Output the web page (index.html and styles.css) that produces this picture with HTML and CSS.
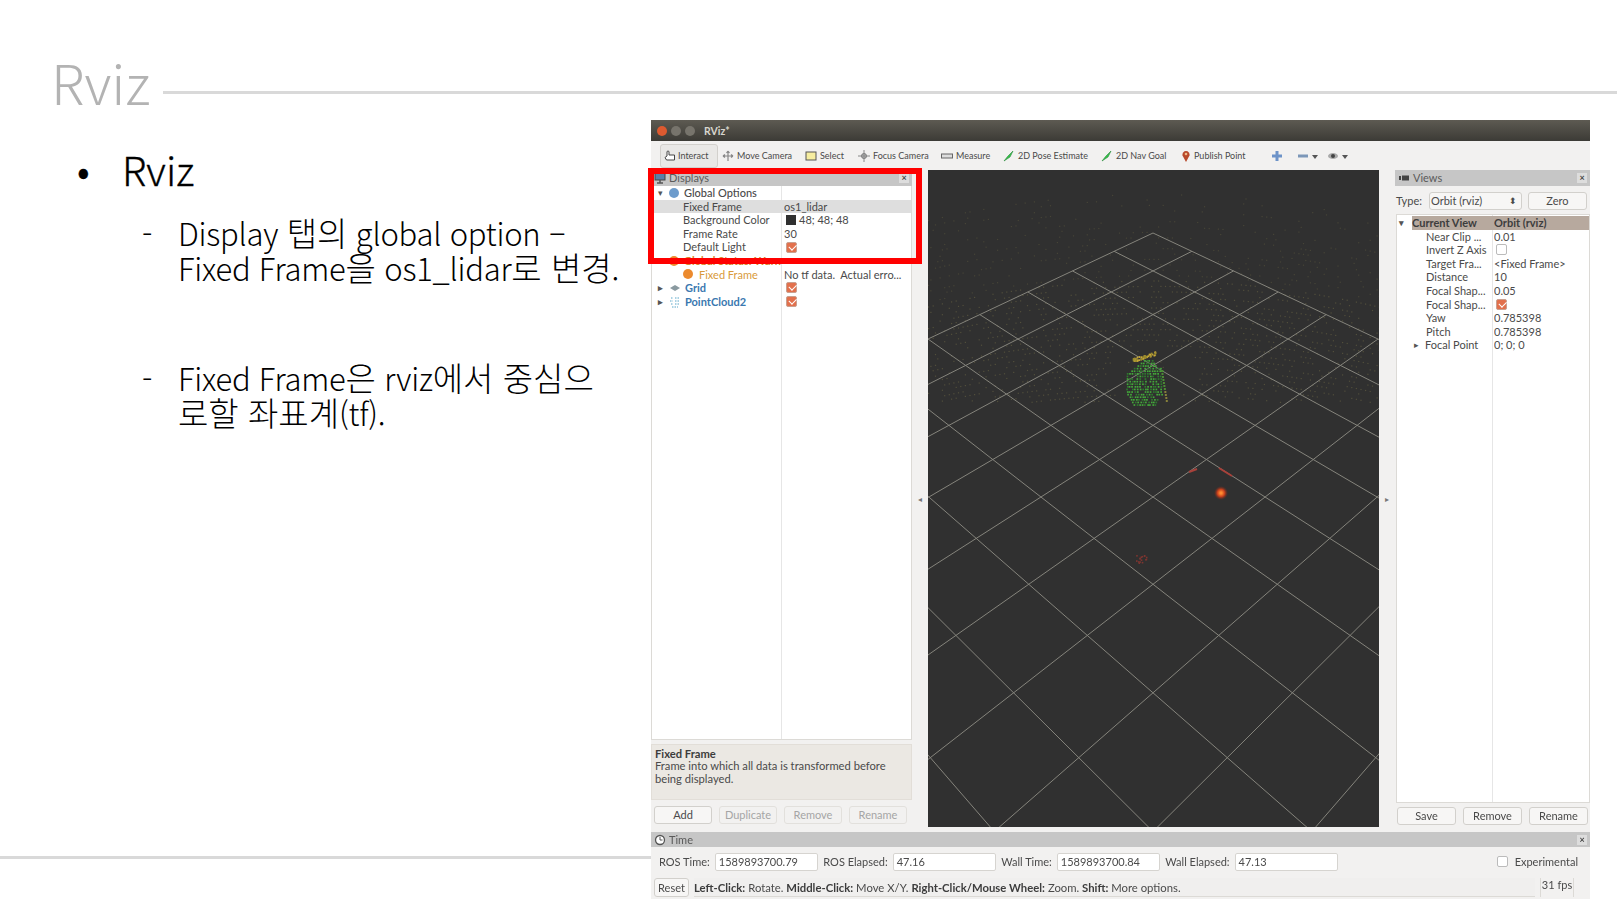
FILE: index.html
```html
<!DOCTYPE html>
<html lang="ko">
<head>
<meta charset="utf-8">
<title>Rviz</title>
<link rel="stylesheet" href="styles.css">
</head>
<body>
<div class="slide">
  <header class="slide-head">
    <h1 class="slide-title">Rviz</h1>
    <div class="slide-line"></div>
  </header>
  <div class="slide-body">
    <section class="notes">
      <div class="bullet"><span class="bullet-mark">•</span><span>Rviz</span></div>
      <div class="sub"><span class="sub-mark">-</span><span>Display <span class="kr">탭의</span> global option –<br>Fixed Frame<span class="kr">을</span> os1_lidar<span class="kr">로 변경</span>.</span></div>
      <div class="sub sub-second"><span class="sub-mark">-</span><span>Fixed Frame<span class="kr">은</span> rviz<span class="kr">에서 중심으</span><br><span class="kr">로할 좌표계</span>(tf).</span></div>
    </section>
    <section class="rviz">
      <div class="titlebar">
        <span class="wbtn wbtn-close"></span><span class="wbtn"></span><span class="wbtn"></span>
        <span class="wtitle">RViz*</span>
      </div>
      <div class="toolbar">
        <div class="tool tool-active"><svg class="ico" viewBox="0 0 12 12"><path d="M3 6V2a1 1 0 0 1 2 0v3h5.500v5H2.500L1 7.500 3 6z" fill="#fff" stroke="#444" stroke-width="1"/></svg>Interact</div>
        <div class="tool tool-move"><svg class="ico" viewBox="0 0 12 12"><path d="M6 1v10M1 6h10M6 1 4.500 3M6 1l1.500 2M1 6l2-1.500M1 6l2 1.500M11 6 9 4.500M11 6 9 7.500" fill="none" stroke="#888" stroke-width="1.200"/></svg>Move Camera</div>
        <div class="tool tool-select"><svg class="ico" viewBox="0 0 12 12"><rect x="1" y="2" width="10" height="8" fill="#f6eda0" stroke="#555" stroke-width="1"/></svg>Select</div>
        <div class="tool tool-focus"><svg class="ico" viewBox="0 0 12 12"><circle cx="6" cy="6" r="2.500" fill="#bbb" stroke="#777"/><path d="M6 0v12M0 6h12" stroke="#888" stroke-width="1"/></svg>Focus Camera</div>
        <div class="tool tool-measure"><svg class="ico" viewBox="0 0 12 12"><rect x="0.500" y="4" width="11" height="4" fill="#ddd" stroke="#666" stroke-width="1"/></svg>Measure</div>
        <div class="tool tool-pose"><svg class="ico" viewBox="0 0 12 12"><path d="M1 11 5 6l5-5-3 6z" fill="#35c24a" stroke="#2a8a3a" stroke-width="0.600"/></svg>2D Pose Estimate</div>
        <div class="tool tool-nav"><svg class="ico" viewBox="0 0 12 12"><path d="M1 11 5 6l5-5-3 6z" fill="#35c24a" stroke="#2a8a3a" stroke-width="0.600"/></svg>2D Nav Goal</div>
        <div class="tool tool-pin"><svg class="ico ico-pin" viewBox="0 0 12 12"><path d="M6 12 2.500 5.500a3.600 3.600 0 1 1 7 0z" fill="#b8492b"/><circle cx="6" cy="4" r="1.300" fill="#eebb88"/></svg>Publish Point</div>
        <svg class="ico ico-plus" viewBox="0 0 12 12"><path d="M6 1v10M1 6h10" stroke="#6d93c8" stroke-width="3"/></svg>
        <svg class="ico ico-minus" viewBox="0 0 12 12"><path d="M1 6h10" stroke="#7c97b8" stroke-width="3"/></svg><span class="drop"></span>
        <svg class="ico ico-eye" viewBox="0 0 12 12"><ellipse cx="6" cy="6" rx="5" ry="3" fill="#aaa"/><circle cx="6" cy="6" r="2" fill="#444"/></svg><span class="drop"></span>
      </div>
      <div class="workspace">
        <aside class="panel panel-left">
          <div class="dock-head"><svg class="ico" viewBox="0 0 12 12"><rect x="1" y="1" width="10" height="7" fill="#5b7fa8" stroke="#444"/><path d="M3 11h6M6 8v3" stroke="#555" stroke-width="1.500"/></svg><span class="dock-title">Displays</span><span class="dock-x">×</span></div>
          <div class="tree tree-left">
            <div class="row"><span class="cell cell-top"><span class="arrow">▾</span><span class="dot dot-blue"></span><span>Global Options</span></span><span class="cell"></span></div>
            <div class="row row-sel"><span class="cell cell-child">Fixed Frame</span><span class="cell">os1_lidar</span></div>
            <div class="row"><span class="cell cell-child">Background Color</span><span class="cell"><span class="swatch"></span>48; 48; 48</span></div>
            <div class="row"><span class="cell cell-child">Frame Rate</span><span class="cell">30</span></div>
            <div class="row"><span class="cell cell-child">Default Light</span><span class="cell"><span class="check"></span></span></div>
            <div class="row row-warn"><span class="cell cell-top"><span class="arrow">▾</span><span class="dot dot-warn"></span><span>Global Status: Warn</span></span><span class="cell"></span></div>
            <div class="row"><span class="cell cell-warnchild"><span class="dot dot-warn"></span><span class="warn-text">Fixed Frame</span></span><span class="cell">No tf data.  Actual erro...</span></div>
            <div class="row row-blue"><span class="cell cell-top"><span class="arrow">▸</span><svg class="ico ico-tree" viewBox="0 0 12 12"><path d="M1 6 6 3l5 3-5 3z" fill="#8a9aa0"/></svg><span>Grid</span></span><span class="cell"><span class="check"></span></span></div>
            <div class="row row-blue"><span class="cell cell-top"><span class="arrow">▸</span><svg class="ico ico-tree" viewBox="0 0 12 12"><path d="M2 2h2M6 2h4M1 5h3M6 5h5M2 8h2M6 8h4M3 11h6" stroke="#58a6c8" stroke-width="1" stroke-dasharray="1.500 1"/></svg><span>PointCloud2</span></span><span class="cell"><span class="check"></span></span></div>
          </div>
          <div class="help"><b>Fixed Frame</b><br>Frame into which all data is transformed before<br>being displayed.</div>
          <div class="btn-row btn-row-left">
            <span class="btn">Add</span><span class="btn btn-off">Duplicate</span><span class="btn btn-off">Remove</span><span class="btn btn-off">Rename</span>
          </div>
        </aside>
        <div class="splitter">◂</div>
        <div class="view3d"><canvas id="scene" width="451" height="657"></canvas></div>
        <div class="splitter">▸</div>
        <aside class="panel panel-right">
          <div class="dock-head"><svg class="ico" viewBox="0 0 12 12"><path d="M1 4h2v4H1zM4 3.500h7v5H4z" fill="#444"/></svg><span class="dock-title">Views</span><span class="dock-x">×</span></div>
          <div class="type-row"><span>Type:</span><span class="combo">Orbit (rviz)<span class="combo-arrows">⬍</span></span><span class="btn btn-zero">Zero</span></div>
          <div class="tree tree-right">
            <div class="row row-head"><span class="arrow">▾</span><span class="cell cell-head">Current View</span><span class="cell">Orbit (rviz)</span></div>
            <div class="row"><span class="cell cell-child">Near Clip ...</span><span class="cell">0.01</span></div>
            <div class="row"><span class="cell cell-child">Invert Z Axis</span><span class="cell"><span class="check check-off"></span></span></div>
            <div class="row"><span class="cell cell-child">Target Fra...</span><span class="cell">&lt;Fixed Frame&gt;</span></div>
            <div class="row"><span class="cell cell-child">Distance</span><span class="cell">10</span></div>
            <div class="row"><span class="cell cell-child">Focal Shap...</span><span class="cell">0.05</span></div>
            <div class="row"><span class="cell cell-child">Focal Shap...</span><span class="cell"><span class="check"></span></span></div>
            <div class="row"><span class="cell cell-child">Yaw</span><span class="cell">0.785398</span></div>
            <div class="row"><span class="cell cell-child">Pitch</span><span class="cell">0.785398</span></div>
            <div class="row"><span class="cell cell-child cell-exp"><span class="arrow">▸</span>Focal Point</span><span class="cell">0; 0; 0</span></div>
          </div>
          <div class="btn-row btn-row-right">
            <span class="btn">Save</span><span class="btn">Remove</span><span class="btn">Rename</span>
          </div>
        </aside>
      </div>
      <div class="dock-head dock-time"><svg class="ico" viewBox="0 0 12 12"><circle cx="6" cy="6" r="4.500" fill="#fff" stroke="#555" stroke-width="1.300"/><path d="M6 3v3h2.500" fill="none" stroke="#555"/></svg><span class="dock-title">Time</span><span class="dock-x">×</span></div>
      <div class="time-row">
        <span>ROS Time:</span><span class="field">1589893700.79</span>
        <span>ROS Elapsed:</span><span class="field">47.16</span>
        <span>Wall Time:</span><span class="field">1589893700.84</span>
        <span>Wall Elapsed:</span><span class="field">47.13</span>
        <span class="exp"><span class="check check-off"></span>Experimental</span>
      </div>
      <div class="status-row">
        <span class="btn btn-reset">Reset</span>
        <span class="status-text"><b>Left-Click:</b> Rotate. <b>Middle-Click:</b> Move X/Y. <b>Right-Click/Mouse Wheel:</b> Zoom. <b>Shift:</b> More options.</span>
        <span class="fps">31 fps</span>
      </div>
      <div class="redbox"></div>
    </section>
  </div>
</div>
<script src="scene.js"></script>
</body>
</html>
```

FILE: styles.css
```css
* { box-sizing: border-box; }
html, body { margin: 0; padding: 0; background: #fff; }
.slide {
  width: 1617px; height: 905px; overflow: hidden; background: #fff;
  font-family: "Noto Sans CJK KR", "Noto Sans", sans-serif;
  color: #000;
}
.slide-head { height: 120px; display: flex; align-items: flex-start; padding-left: 51px; }
.slide-title { margin: 43px 0 0; font-size: 55px; line-height: 76px; font-weight: 300; color: #b3b3b3; }
.slide-line { flex: 1; height: 3px; background: #d9d9d9; margin: 91px 0 0 13px; }
.slide-body { display: flex; height: 785px; }
.notes { width: 651px; height: 739px; border-bottom: 3px solid #d9d9d9; padding: 23px 0 0 77px; flex: none; }
.bullet { display: flex; font-size: 40px; line-height: 52px; font-weight: 300; -webkit-text-stroke: 0.3px #000; }
.bullet-mark { width: 45px; }
.sub { display: flex; font-size: 31px; line-height: 35px; margin: 20px 0 0 65px; font-weight: 300; white-space: nowrap; letter-spacing: -0.25px; }
.kr { font-size: 33px; line-height: 1; letter-spacing: 0; }
.sub-mark { width: 36px; }
.sub-second { margin-top: 75px; }

.rviz {
  position: relative; width: 939px; height: 779px; flex: none;
  display: flex; flex-direction: column;
  background: #f2f1f0; color: #4a4a4a;
  font-family: Lato, "Noto Sans", sans-serif; font-size: 11px; line-height: 13.6px;
  filter: blur(0.35px);
}
.titlebar { height: 21px; display: flex; align-items: center; padding: 2px 0 0 6px; gap: 4px;
  background: linear-gradient(#5d5a52, #3c3b36); }
.wbtn { width: 10px; height: 10px; border-radius: 50%; background: #77746c; margin-top: -2px; }
.wbtn-close { background: #dd5a30; }
.wtitle { color: #d8d6cf; font-weight: 700; margin-left: 5px; font-size: 10.5px; }
.toolbar { height: 29px; display: flex; align-items: center; padding: 1px 0 0 9px; font-size: 9px; }
.tool { display: flex; align-items: center; gap: 3px; height: 24px; flex: none; }
.tool-active { width: 58px; padding-left: 3px; gap: 2px; background: #e9e8e6; border: 1px solid #d2d0cc; border-radius: 3px; margin-right: 4px; }
.tool-move { width: 83px; }
.tool-select { width: 53px; }
.tool-focus { width: 83px; }
.tool-measure { width: 62px; }
.tool-pose { width: 98px; }
.tool-nav { width: 79px; }
.tool-pin { width: 91px; gap: 2px; }
.ico { width: 12px; height: 12px; flex: none; display: block; }
.ico-minus { margin-left: 14px; }
.ico-eye { margin-left: 9px; }
.drop { width: 0; height: 0; border: 3px solid transparent; border-top: 4px solid #555; margin: 4px 0 0 3px; }
.workspace { height: 660px; display: flex; }
.panel { display: flex; flex-direction: column; flex: none; }
.panel-left { width: 261px; }
.panel-right { width: 195px; }
.splitter { width: 16px; flex: none; display: flex; align-items: center; justify-content: center; font-size: 8px; color: #777; }
.view3d { width: 451px; height: 657px; flex: none; background: #303030; }
.view3d canvas { display: block; }
.dock-head { height: 16px; flex: none; display: flex; align-items: center; gap: 3px; padding: 0 3px; background: #c6c6c6; color: #5a5a5a; }
.dock-title { flex: 1; }
.dock-x { width: 10px; height: 10px; line-height: 9px; text-align: center; background: #ddd; font-size: 9px; font-weight: 700; color: #444; }
.dock-time { margin-top: 2px; height: 15px; }
.tree { background-color: #fff; border: 1px solid #dcdad6; border-top: 0; }
.tree-left { height: 554px; flex: none; background-image: linear-gradient(#e6e6e6, #e6e6e6); background-size: 1px 100%; background-position: 129px 0; background-repeat: no-repeat; }
.row { display: grid; grid-template-columns: 132px 1fr; height: 13.6px; white-space: nowrap; }
.row-sel { background: #dedede; }
.cell { display: flex; align-items: center; overflow: hidden; white-space: pre; }
.cell-top { padding-left: 6px; font-weight: 500; }
.cell-child { padding-left: 31px; }
.cell-warnchild { padding-left: 31px; gap: 6px; }
.warn-text { color: #d99a3c; }
.row-warn .cell-top { color: #d9862c; font-weight: 700; }
.row-blue .cell-top { color: #3a78b0; font-weight: 700; }
.arrow { width: 8px; font-size: 9px; color: #555; flex: none; margin-right: 3px; }
.dot { width: 10px; height: 10px; border-radius: 50%; flex: none; margin-right: 5px; }
.cell-warnchild .dot { margin-right: 0; }
.dot-blue { background: #6d9ccc; }
.dot-warn { background: #ec8a2e; }
.ico-tree { margin-right: 4px; }
.swatch { width: 10px; height: 10px; background: #303030; margin: 0 3px 0 2px; flex: none; }
.check { width: 11px; height: 11px; margin-left: 2px; background: #e2704c; border: 1px solid #c9a090; border-radius: 2px; flex: none; position: relative; }
.check::after { content: ""; position: absolute; left: 2px; top: 1px; width: 6px; height: 3.500px; border-left: 1.500px solid #fff; border-bottom: 1.500px solid #fff; transform: rotate(-45deg); }
.check-off { background: #fff; border-color: #bbb; }
.check-off::after { display: none; }
.help { height: 56px; margin-top: 4px; flex: none; background: #ebe8e3; border: 1px solid #e2ded8; padding: 3px 3px; line-height: 12.300px; font-size: 11.2px; }
.help b, .status-text b { font-weight: 700; color: #3d3d3d; }
.btn-row { display: flex; flex: none; }
.btn-row-left { gap: 7px; padding: 6px 3px 0; }
.btn-row-left .btn { width: 58px; }
.btn { display: flex; align-items: center; justify-content: center; height: 18px; background: #f7f6f5; border: 1px solid #d2d0cc; border-radius: 3px; flex: none; }
.btn-off { background: #f2f1f0; color: #a5a5a5; border-color: #e2e0dc; }
.type-row { height: 28px; flex: none; display: flex; align-items: center; padding: 1px 0 0 1px; gap: 6px; }
.combo { width: 93px; height: 18px; display: flex; align-items: center; justify-content: space-between; padding: 0 1px; margin-left: 1px; background: #f7f6f5; border: 1px solid #d2d0cc; border-radius: 3px; }
.combo-arrows { font-size: 9px; margin-right: 3px; }
.btn-zero { width: 59px; }
.tree-right { height: 589px; flex: none; margin-left: 1px; padding-top: 1px; border-top: 1px solid #dcdad6; background-image: linear-gradient(#e6e6e6, #e6e6e6); background-size: 1px 100%; background-position: 95px 0; background-repeat: no-repeat; }
.tree-right .row { grid-template-columns: 97px 1fr; }
.tree-right .cell-child { padding-left: 29px; }
.cell-exp { padding-left: 17px !important; }
.row-head { position: relative; background: #b7a99e; margin-left: 15px; grid-template-columns: 82px 1fr !important; color: #3d3d3d; font-weight: 700; }
.row-head .arrow { position: absolute; left: -13px; top: 0; }
.cell-head { padding-left: 0; }
.btn-row-right { gap: 7px; padding: 4px 3px 0 2px; }
.btn-row-right .btn { width: 59px; }
.time-row { height: 29px; flex: none; display: flex; align-items: center; padding-left: 8px; gap: 5px; }
.field { width: 103.500px; height: 18px; padding: 0 3px; display: flex; align-items: center; background: #fff; border: 1px solid #d6d4d0; border-radius: 2px; flex: none; }
.exp { margin-left: auto; margin-right: 12px; display: flex; align-items: center; gap: 7px; }
.status-row { height: 19px; flex: none; display: flex; align-items: stretch; padding-left: 3px; gap: 5px; margin-top: 2px; }
.btn-reset { width: 35px; height: 19px; }
.status-text { flex: 1; white-space: pre; display: block; line-height: 19px; font-size: 11.3px; background: #f0efee; border-bottom: 1px solid #dcdad6; }
.fps { width: 34px; margin-right: 16px; border-left: 1px solid #dcdad6; border-right: 1px solid #dcdad6; text-align: center; line-height: 14px; }
.redbox { position: absolute; left: -3px; top: 48px; width: 274px; height: 96px; border: 6px solid #f00; }
```

FILE: scene.js
```js
(function () {
  var c = document.getElementById('scene');
  var g = c.getContext('2d');
  var OX = 928, OY = 170, A = 37.6, D = -0.0329, C = 10.05, CX = 1153, Y0 = 233;
  function P(i, j) {
    var s = i + j, w = 1 + D * s;
    return [CX + A * (i - j) / w - OX, (Y0 + C * s) / w - OY];
  }
  function rnd(n) { var x = Math.sin(n * 12.9898) * 43758.5453; return x - Math.floor(x); }
  g.fillStyle = '#303030';
  g.fillRect(0, 0, 451, 657);

  // background point cloud
  for (var r = 0; r < 44; r++) {
    var y0 = 24 + r * 5.4;
    for (var x = 0; x < 451; x += 4.6) {
      var k = r * 1000 + x;
      var t = (x - 225) / 225;
      var y = y0 + t * t * 26;
      var dx = x + (r % 2) * 2.3;
      var dens = r < 16 ? 0.1 + r * 0.012 : 0.5;
      if (y > 178 && Math.abs(t) < 0.2) dens = 0.04;
      if (y > 232) dens = 0;
      if (rnd(k) > dens) continue;
      g.fillStyle = 'rgba(128,122,76,' + (r < 16 ? 0.28 : 0.42) + ')';
      g.fillRect(dx, y, 1.2, 1.2);
    }
  }

  // grid
  g.strokeStyle = '#85847c';
  g.lineWidth = 1;
  for (var n = 0; n <= 10; n++) {
    var a = P(n, 0), b = P(n, 10), a2 = P(0, n), b2 = P(10, n);
    g.beginPath(); g.moveTo(a[0], a[1]); g.lineTo(b[0], b[1]); g.stroke();
    g.beginPath(); g.moveTo(a2[0], a2[1]); g.lineTo(b2[0], b2[1]); g.stroke();
  }

  // person
  var i = 0;
  for (var py = 360; py < 405; py += 2.6) {
    var half = py < 372 ? 4 + (py - 360) * 1.2 : 18 - Math.max(0, py - 392) * 0.6;
    var cx = 1144 + (py < 372 ? 3 : 0);
    for (var px = cx - half; px < cx + half; px += 2.6) {
      i++;
      if (rnd(i + 5) < 0.1) continue;
      g.fillStyle = rnd(i) > 0.4 ? '#43a83a' : '#2f7a2e';
      g.fillRect(px - OX + rnd(i + 9), py - OY, 1.7, 1.7);
    }
  }
  for (var ay = 370; ay < 402; ay += 3) {
    g.fillStyle = ay > 388 ? '#86803a' : '#4c8a35';
    g.fillRect(1161 + (ay - 370) * 0.16 - OX, ay - OY, 2, 2);
  }
  // head: a scatter of yellow returns
  for (var h = 0; h < 46; h++) {
    var hx = 1132 + rnd(h + 70) * 24;
    var hy = 358 - (hx - 1132) * 0.3 + rnd(h + 120) * 3.5;
    g.fillStyle = rnd(h + 200) > 0.5 ? '#c7a838' : '#9a8a2e';
    g.fillRect(hx - OX, hy - OY, 1.8, 1.8);
  }

  // reflections
  g.strokeStyle = '#a8413a';
  g.lineWidth = 2;
  g.beginPath(); g.moveTo(1189 - OX, 472 - OY); g.lineTo(1197 - OX, 469 - OY); g.stroke();
  g.beginPath(); g.moveTo(1219 - OX, 468 - OY); g.lineTo(1232 - OX, 476 - OY); g.stroke();
  var glow = g.createRadialGradient(1221 - OX, 493 - OY, 1, 1221 - OX, 493 - OY, 7);
  glow.addColorStop(0, '#ff8a30');
  glow.addColorStop(0.45, '#c8401c');
  glow.addColorStop(1, 'rgba(110,40,30,0)');
  g.fillStyle = glow;
  g.fillRect(1210 - OX, 482 - OY, 22, 22);
  g.fillStyle = '#7d3530';
  for (var q = 0; q < 16; q++) {
    g.fillRect(1134 + rnd(q + 3) * 12 - OX, 554 + rnd(q + 40) * 9 - OY, 1.6, 1.6);
  }
})();
```
